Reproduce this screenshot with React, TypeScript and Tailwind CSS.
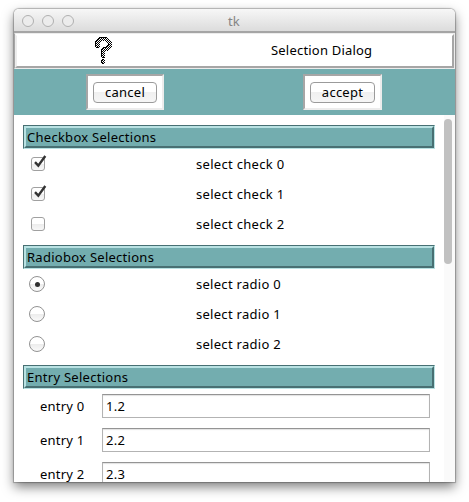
import React from "react";

const QUESTION_ROWS: number[] = [
  0x00ff0, 0x01558, 0x02aac, 0x05556, 0x0a82b, 0x15015, 0x0a00b, 0x16015, 0x0b00b,
  0x15815, 0x0af0e, 0x05580, 0x02ac0, 0x01540, 0x002c0, 0x00140, 0x002c0, 0x00140,
  0x002c0, 0x00140, 0x00380, 0x00000, 0x00180, 0x002c0, 0x00140, 0x002c0, 0x00180,
];

function QuestionIcon() {
  let d = "";
  QUESTION_ROWS.forEach((row, y) => {
    for (let x = 0; x < 17; x++) {
      if ((row >> x) & 1) d += `M${x} ${y}h1v1h-1z`;
    }
  });
  return (
    <svg width="17" height="28" viewBox="0 0 17 28" shapeRendering="crispEdges" aria-hidden="true">
      <path d={d} fill="#000" />
    </svg>
  );
}

function PushButton({ label, frame, button }: { label: string; frame: string; button: string }) {
  return (
    <div
      className={`flex h-9 justify-center border-2 border-t-[#a6a6a6] border-r-[#ececec] border-b-[#ececec] border-l-[#a6a6a6] bg-white pt-[6px] ${frame}`}
    >
      <button
        className={`flex h-[21px] items-center justify-center rounded-[4px] border border-[#9b9b9b] bg-linear-to-b from-white from-50% via-[#f0f0f0] via-50% to-[#f6f6f6] pb-px leading-[17px] tracking-[0.25px] ${button}`}
      >
        {label}
      </button>
    </div>
  );
}

function SectionHeader({ children }: { children: React.ReactNode }) {
  return (
    <h2 className="h-6 w-[412px] shrink-0 border border-t-[#487073] border-r-[#b9e2e3] border-b-[#b9e2e3] border-l-[#487073]">
      <span className="flex h-[22px] items-center border-2 border-t-[#b9e2e3] border-r-[#487073] border-b-[#487073] border-l-[#b9e2e3] bg-[#73adaf] pl-px leading-[18px] tracking-[0.27px] text-black">
        {children}
      </span>
    </h2>
  );
}

function CheckRow({ label, checked }: { label: string; checked: boolean }) {
  return (
    <div className="flex h-[30px] w-[412px] shrink-0 items-center">
      <span className="relative ml-2 h-[14px] w-[14px] rounded-[3px] border border-[#a0a0a0] bg-linear-to-b from-white from-50% via-[#ececec] via-50% to-[#f8f8f8]">
        {checked && (
          <svg className="absolute -top-[3px] left-[1px]" width="14" height="14" viewBox="0 0 14 14" aria-hidden="true">
            <path d="M2 7.2L5.3 10.6L12.3 1" fill="none" stroke="#333" strokeWidth="2.4" />
          </svg>
        )}
      </span>
      <span className="ml-[151px] leading-5 tracking-[0.3px]">{label}</span>
    </div>
  );
}

function RadioRow({ label, checked }: { label: string; checked: boolean }) {
  return (
    <div className="flex h-[30px] w-[412px] shrink-0 items-center">
      <span className="ml-[6px] flex h-4 w-4 items-center justify-center rounded-full border border-[#929292] bg-linear-to-b from-white from-50% via-[#ececec] via-50% to-[#fafafa]">
        {checked && <span className="h-[5px] w-[5px] rounded-full bg-[#2e2e2e]" />}
      </span>
      <span className="ml-[151px] leading-5 tracking-[0.28px]">{label}</span>
    </div>
  );
}

function EntryRow({ label, value }: { label: string; value: string }) {
  return (
    <div className="flex h-[34px] shrink-0 items-start">
      <span className="w-[79px] pl-[17px] leading-6 tracking-[0.2px]">{label}</span>
      <span className="h-6 w-[328px] border border-t-[#949494] border-r-[#b3b3b3] border-b-[#b3b3b3] border-l-[#b3b3b3] bg-white pl-[3px] leading-[22px] tracking-[0.3px] shadow-[inset_0_1px_1px_#e2e2e2]">
        {value}
      </span>
    </div>
  );
}

export default function App() {
  return (
    <div className="h-[502px] w-[469px] overflow-hidden bg-white pt-[9px] pl-[14px] font-['Noto_Sans','Open_Sans',sans-serif] text-[13px] text-black">
      <div className="flex h-[473px] w-[441px] flex-col rounded-t-[5px] bg-white shadow-[0_0_1px_1px_rgba(0,0,0,0.25),0_5px_12px_rgba(0,0,0,0.5)]">
        <div className="flex h-6 shrink-0 items-center rounded-t-[5px] border-b-2 border-[#a5a5a5] bg-linear-to-b from-[#f7f7f7] to-[#dcdcdc] pt-[2px]">
          <div className="flex w-[214px] gap-2 pl-2">
            <span className="h-3 w-3 rounded-full border border-[#b0b0b0] bg-[#ececec]" />
            <span className="h-3 w-3 rounded-full border border-[#b0b0b0] bg-[#ececec]" />
            <span className="h-3 w-3 rounded-full border border-[#b0b0b0] bg-[#ececec]" />
          </div>
          <span className="leading-5 text-[#858585]">tk</span>
        </div>
        <div className="h-9 shrink-0 border border-t-[#ececec] border-r-[#ececec] border-b-[#ececec] border-l-[#a6a6a6]">
          <div className="flex h-[34px] items-center border-2 border-t-white border-r-[#a6a6a6] border-b-[#a6a6a6] border-l-[#ececec]">
            <div className="flex w-[173px] justify-center">
              <QuestionIcon />
            </div>
            <span className="ml-[81px] tracking-[0.2px]">Selection Dialog</span>
          </div>
        </div>
        <div className="flex h-[46px] shrink-0 items-start bg-[#73adaf] pt-[5px] pl-[72px]">
          <PushButton label="cancel" frame="w-[78px]" button="w-16" />
          <div className="w-[139px]" />
          <PushButton label="accept" frame="w-[79px]" button="w-[65px]" />
        </div>
        <div className="flex h-[367px] overflow-hidden">
          <div className="flex w-[430px] flex-col overflow-hidden pt-[10px] pl-[9px]">
            <SectionHeader>Checkbox Selections</SectionHeader>
            <CheckRow label="select check 0" checked />
            <CheckRow label="select check 1" checked />
            <CheckRow label="select check 2" checked={false} />
            <div className="h-[6px] shrink-0" />
            <SectionHeader>Radiobox Selections</SectionHeader>
            <RadioRow label="select radio 0" checked />
            <RadioRow label="select radio 1" checked={false} />
            <RadioRow label="select radio 2" checked={false} />
            <div className="h-[6px] shrink-0" />
            <SectionHeader>Entry Selections</SectionHeader>
            <div className="h-[5px] shrink-0" />
            <EntryRow label="entry 0" value="1.2" />
            <EntryRow label="entry 1" value="2.2" />
            <EntryRow label="entry 2" value="2.3" />
          </div>
          <div className="w-[11px] bg-[#fafafa] pt-1">
            <div className="h-[145px] w-2 rounded-full bg-[#c1c1c1]" />
          </div>
        </div>
      </div>
    </div>
  );
}
